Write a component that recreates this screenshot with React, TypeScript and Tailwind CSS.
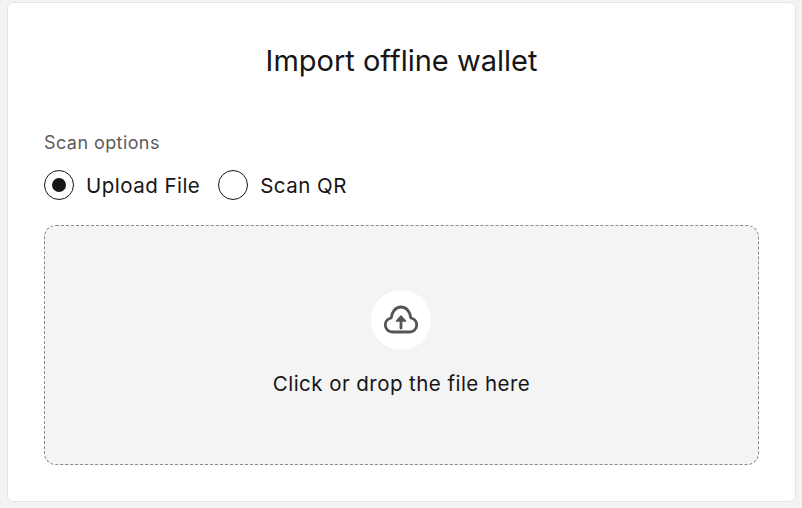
export default function App() {
  return (
    <div className="w-[802px] h-[508px] bg-[#f3f3f3] pl-[7px] pr-[6px] pt-[2px] pb-[6px] font-['Inter',sans-serif] text-[#161616] overflow-hidden">
      <div className="h-full bg-white border border-[#e4e4e4] rounded-[6px] px-[36px]">
        {/* title */}
        <h1 className="text-center text-[29px] leading-[36px] font-normal mt-[40px]">
          Import offline wallet
        </h1>

        {/* scan options */}
        <p className="text-[18px] leading-[24px] tracking-[0.42px] text-[#5c5c5c] mt-[52px]">Scan options</p>
        <div className="flex items-center mt-[15px] h-[30px]">
          <label className="flex items-center gap-[12px]">
            <span className="w-[30px] h-[30px] rounded-full border border-[#161616] flex items-center justify-center">
              <span className="w-[14px] h-[14px] rounded-full bg-[#161616]" />
            </span>
            <span className="text-[20.5px] leading-[30px] pt-[2px] tracking-[0.47px]">Upload File</span>
          </label>
          <label className="flex items-center gap-[12px] ml-[18px]">
            <span className="w-[30px] h-[30px] rounded-full border border-[#161616]" />
            <span className="text-[20.5px] leading-[30px] pt-[2px] tracking-[0.47px]">Scan QR</span>
          </label>
        </div>

        {/* dropzone */}
        <div className="mt-[25px] h-[240px] bg-[#f4f4f4] border border-dashed border-[#8a8a8a] rounded-[12px] flex flex-col items-center pt-[64px]">
          <div className="w-[60px] h-[60px] mr-[1px] rounded-full bg-white flex items-center justify-center">
            <svg width="36" height="36" viewBox="0 0 36 36" fill="none" stroke="#555555" strokeWidth="2.8" strokeLinecap="round" strokeLinejoin="round">
              <path d="M9.5 30 H26.5 C30.5 30 33.7 27 33.7 23 C33.7 19.5 31.3 16.8 27.8 16 C27.3 10 23.5 5 18 5 C12.5 5 8.7 10 8.2 16 C4.7 16.8 2.3 19.5 2.3 23 C2.3 27 5.5 30 9.5 30 Z" />
              <path d="M18 26 V18" />
              <path d="M18 14 L13.5 19 H22.5 Z" fill="#555555" strokeWidth="1.5" />
            </svg>
          </div>
          <p className="text-[20.5px] leading-[30px] tracking-[0.45px] mt-[19px]">Click or drop the file here</p>
        </div>
      </div>
    </div>
  );
}
